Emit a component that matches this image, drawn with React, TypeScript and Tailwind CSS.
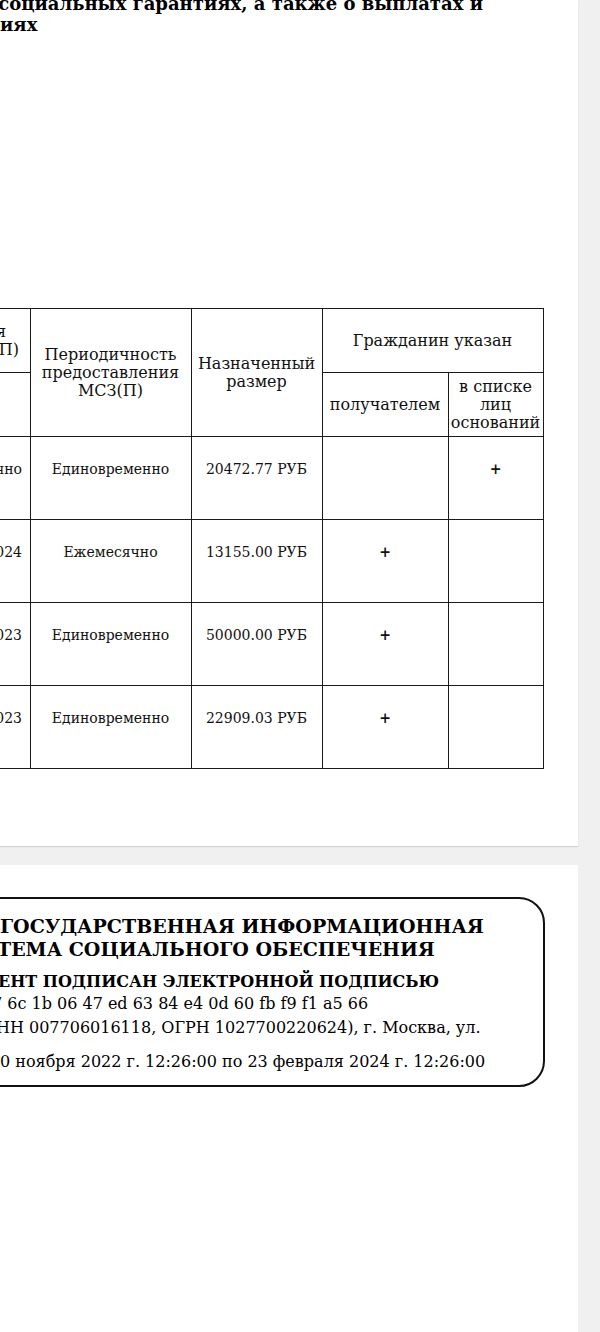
const rows = [
  { lead: "Бессрочно", period: "Единовременно", amount: "20472.77 РУБ", recipient: false, basis: true },
  { lead: "31.12.2024", period: "Ежемесячно", amount: "13155.00 РУБ", recipient: true, basis: false },
  { lead: "31.12.2023", period: "Единовременно", amount: "50000.00 РУБ", recipient: true, basis: false },
  { lead: "31.12.2023", period: "Единовременно", amount: "22909.03 РУБ", recipient: true, basis: false },
]

function Plus() {
  return <span className="font-bold text-[14px]">+</span>
}

export default function App() {
  return (
    <div className="w-[600px] h-[1332px] bg-[#f0f0f0] overflow-hidden flex flex-col font-['DejaVu_Serif',serif] text-[#111]">
      {/* page 1 */}
      <div className="w-[578px] h-[846px] shrink-0 bg-white overflow-hidden shadow-[0_1px_1px_rgba(0,0,0,0.12)]">
        <div className="-mt-[7px] text-[18px] leading-[21px] font-bold text-black">
          <div className="flex justify-end pr-[95px] whitespace-nowrap">
            о социальных гарантиях, а также о выплатах и
          </div>
          <div className="whitespace-nowrap">иях</div>
        </div>

        <table className="mt-[273px] border-collapse table-fixed w-[543px] text-center">
          <colgroup>
            <col className="w-[30px]" />
            <col className="w-[161px]" />
            <col className="w-[131px]" />
            <col className="w-[126px]" />
            <col className="w-[95px]" />
          </colgroup>
          <thead className="text-[16px] leading-[18px] font-normal">
            <tr className="h-[64px]">
              <th className="border-y border-r border-[#1a1a1a] p-0 font-normal align-middle">
                <div className="w-[30px] overflow-hidden flex flex-col items-end whitespace-nowrap">
                  <span className="pr-[24px]">назначения</span>
                  <span className="pr-[11px]">МСЗ(П)</span>
                </div>
              </th>
              <th rowSpan={2} className="border border-[#1a1a1a] p-0 font-normal align-middle">
                Периодичность
                <br />
                предоставления
                <br />
                МСЗ(П)
              </th>
              <th rowSpan={2} className="border border-[#1a1a1a] p-0 font-normal align-middle">
                Назначенный
                <br />
                размер
              </th>
              <th colSpan={2} className="border border-[#1a1a1a] p-0 font-normal align-middle">
                Гражданин указан
              </th>
            </tr>
            <tr className="h-[64px]">
              <th className="border-y border-r border-[#1a1a1a] p-0 font-normal"></th>
              <th className="border border-[#1a1a1a] p-0 font-normal align-middle">получателем</th>
              <th className="border border-[#1a1a1a] p-0 font-normal align-middle whitespace-nowrap">
                в списке
                <br />
                лиц
                <br />
                оснований
              </th>
            </tr>
          </thead>
          <tbody className="text-[14px] leading-[18px]">
            {rows.map((r, i) => (
              <tr key={i} className="h-[83px]">
                <td className="border-y border-r border-[#1a1a1a] p-0 align-top">
                  <div className="w-[30px] overflow-hidden flex justify-end whitespace-nowrap pt-[23px] pr-[8px]">
                    {r.lead}
                  </div>
                </td>
                <td className="border border-[#1a1a1a] p-0 pt-[23px] align-top">{r.period}</td>
                <td className="border border-[#1a1a1a] p-0 pt-[23px] align-top">{r.amount}</td>
                <td className="border border-[#1a1a1a] p-0 pt-[23px] align-top">{r.recipient && <Plus />}</td>
                <td className="border border-[#1a1a1a] p-0 pt-[23px] align-top">{r.basis && <Plus />}</td>
              </tr>
            ))}
          </tbody>
        </table>
      </div>

      {/* page 2 */}
      <div className="w-[578px] mt-[19px] flex-1 bg-white overflow-hidden">
        <div className="mt-[32px] -ml-[200px] w-[745px] h-[190px] rounded-[26px] border-2 border-[#111]">
          <div className="pl-[195px] pt-[16px] text-black whitespace-nowrap">
            <div className="text-[19px] leading-[23px] font-bold">
              <div className="pl-[3px]">ГОСУДАРСТВЕННАЯ ИНФОРМАЦИОННАЯ</div>
              <div>ТЕМА СОЦИАЛЬНОГО ОБЕСПЕЧЕНИЯ</div>
            </div>
            <div className="mt-[11px] text-[16px] leading-[20px] font-bold pl-[1px]">
              ЕНТ ПОДПИСАН ЭЛЕКТРОННОЙ ПОДПИСЬЮ
            </div>
            <div className="text-[16px] leading-[24px]">
              <div className="-ml-[5px]">7 6c 1b 06 47 ed 63 84 e4 0d 60 fb f9 f1 a5 66</div>
              <div className="-ml-[1px]">НН 007706016118, ОГРН 1027700220624), г. Москва, ул.</div>
              <div className="mt-[10px] pl-[3px]">0 ноября 2022 г. 12:26:00 по 23 февраля 2024 г. 12:26:00</div>
            </div>
          </div>
        </div>
      </div>
    </div>
  )
}
